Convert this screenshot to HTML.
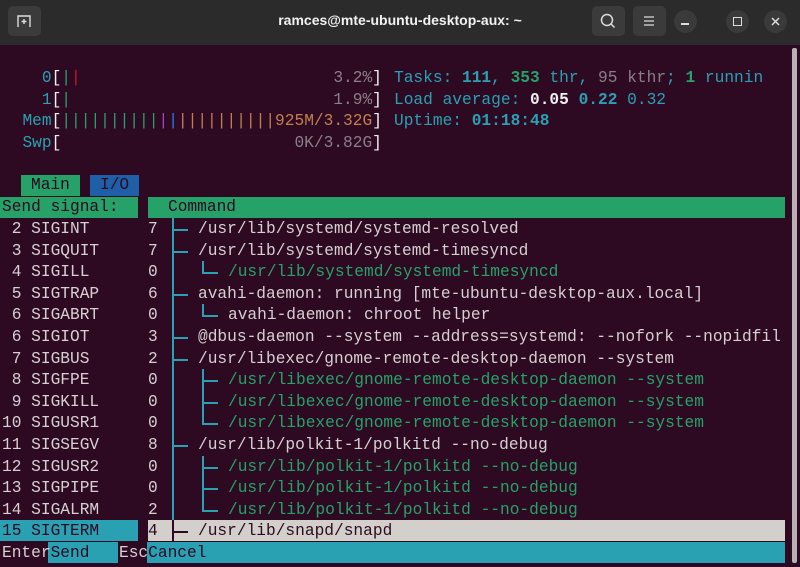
<!DOCTYPE html>
<html><head><meta charset="utf-8"><style>
*{margin:0;padding:0;box-sizing:border-box}
body{width:800px;height:567px;overflow:hidden;background:#2d0922;position:relative;font-family:"Liberation Mono",monospace;font-size:16.2px;color:#d6d0d2}
.t{position:absolute;white-space:pre;line-height:21.6px;height:21.6px;margin-top:1px}
.c{color:#2aa1b3}.g{color:#26a269}.gr{color:#8a7f88}.w{color:#f0f0f0}.o{color:#c0804f}.r{color:#c01c28}.m{color:#a347ba}.b{color:#2a7bde}.k{color:#2d0922}
.bd{font-weight:bold}
.bar{position:absolute}
.v{position:absolute;background:#2aa1b3;width:2px}
.h{position:absolute;background:#2aa1b3;height:2px}
</style></head><body>
<div class="bar" style="left:0;top:0;width:800px;height:45px;background:#2b2b2b"></div>
<div class="bar" style="left:8px;top:6px;width:33px;height:30px;background:#3b3b3b;border-radius:5px"></div>
<svg style="position:absolute;left:16px;top:14px" width="16" height="14" viewBox="0 0 16 14"><path d="M2 13V2h12v11M8 5v5M5.5 7.5h5" stroke="#ddd" stroke-width="1.4" fill="none"/></svg>
<div style="position:absolute;left:0;width:800px;top:12px;text-align:center;font:bold 14px 'Liberation Sans',sans-serif;color:#f2f2f2">ramces@mte-ubuntu-desktop-aux: ~</div>
<div class="bar" style="left:592px;top:6px;width:33px;height:30px;background:#3b3b3b;border-radius:5px"></div>
<svg style="position:absolute;left:600px;top:13px" width="16" height="16"><circle cx="7" cy="7" r="5.5" stroke="#ddd" stroke-width="1.5" fill="none"/><path d="M11 11l3.5 3.5" stroke="#ddd" stroke-width="1.5"/></svg>
<div class="bar" style="left:633px;top:6px;width:33px;height:30px;background:#3b3b3b;border-radius:5px"></div>
<svg style="position:absolute;left:643px;top:15px" width="12" height="12"><path d="M1 2h10M1 6h10M1 10h10" stroke="#ddd" stroke-width="1.3"/></svg>
<div class="bar" style="left:674px;top:10px;width:23px;height:23px;background:#3a3a3a;border-radius:50%"></div>
<div class="bar" style="left:681px;top:23px;width:8px;height:1.5px;background:#ddd"></div>
<div class="bar" style="left:726px;top:10px;width:23px;height:23px;background:#3a3a3a;border-radius:50%"></div>
<div class="bar" style="left:733px;top:17px;width:9px;height:9px;border:1.5px solid #ddd"></div>
<div class="bar" style="left:764px;top:10px;width:23px;height:23px;background:#3a3a3a;border-radius:50%"></div>
<svg style="position:absolute;left:771px;top:17px" width="9" height="9"><path d="M1 1l7 7M8 1l-7 7" stroke="#ddd" stroke-width="1.5"/></svg>
<div class="bar" style="left:792px;top:48px;width:5px;height:515px;background:#b8b0b5;border-radius:2px"></div>

<div class="t" style="left:3px;top:67px">    <span class="c">0</span><span class="w">[</span><span class="g">|</span><span class="r">|</span>                          <span class="gr">3.2%</span><span class="w">]</span></div>
<div class="t" style="left:3px;top:89px">    <span class="c">1</span><span class="w">[</span><span class="g">|</span>                           <span class="gr">1.9%</span><span class="w">]</span></div>
<div class="t" style="left:3px;top:110px">  <span class="c">Mem</span><span class="w">[</span><span class="g">||||||||||</span><span class="m">|</span><span class="b">|</span><span class="o">||||||||||925M/3.32G</span><span class="w">]</span></div>
<div class="t" style="left:3px;top:132px">  <span class="c">Swp</span><span class="w">[</span>                        <span class="gr">0K/3.82G</span><span class="w">]</span></div>
<div class="t c" style="left:394px;top:67px">Tasks: <span class="bd">111</span>, <span class="g bd">353</span> thr, <span class="gr">95 kthr</span>; <span class="g bd">1</span> runnin</div>
<div class="t c" style="left:394px;top:89px">Load average: <span class="w bd">0.05</span> <span class="bd">0.22</span> 0.32</div>
<div class="t c" style="left:394px;top:110px">Uptime: <span class="bd">01:18:48</span></div>

<div class="bar" style="left:21px;top:175px;width:59px;height:21px;background:#26a269"></div>
<div class="bar" style="left:90px;top:175px;width:49px;height:21px;background:#1f5fa8"></div>
<div class="t" style="left:31px;top:174px;color:#2d0922">Main</div>
<div class="t" style="left:100px;top:174px;color:#2d0922">I/O</div>
<div class="bar" style="left:0;top:197px;width:138px;height:21px;background:#26a269"></div>
<div class="bar" style="left:148px;top:197px;width:637px;height:21px;background:#26a269"></div>
<div class="t k" style="left:2px;top:196px">Send signal:</div>
<div class="t k" style="left:168px;top:196px">Command</div>

<div class="bar" style="left:0;top:520px;width:138px;height:21px;background:#2aa1b3"></div>
<div class="bar" style="left:148px;top:520px;width:637px;height:21px;background:#d3d0cc"></div>
<div class="bar" style="left:48px;top:542px;width:70px;height:21px;background:#2aa1b3"></div>
<div class="bar" style="left:147px;top:542px;width:638px;height:21px;background:#2aa1b3"></div>

<div class="v" style="left:172px;top:218px;height:323px"></div>
<div class="v" style="left:172px;top:520px;height:21px;background:#2d0922"></div>

<div class="t" style="left:2px;top:218px"> 2 SIGINT</div>
<div class="t" style="left:2px;top:240px"> 3 SIGQUIT</div>
<div class="t" style="left:2px;top:261px"> 4 SIGILL</div>
<div class="t" style="left:2px;top:283px"> 5 SIGTRAP</div>
<div class="t" style="left:2px;top:304px"> 6 SIGABRT</div>
<div class="t" style="left:2px;top:326px"> 6 SIGIOT</div>
<div class="t" style="left:2px;top:348px"> 7 SIGBUS</div>
<div class="t" style="left:2px;top:369px"> 8 SIGFPE</div>
<div class="t" style="left:2px;top:391px"> 9 SIGKILL</div>
<div class="t" style="left:2px;top:412px">10 SIGUSR1</div>
<div class="t" style="left:2px;top:434px">11 SIGSEGV</div>
<div class="t" style="left:2px;top:456px">12 SIGUSR2</div>
<div class="t" style="left:2px;top:477px">13 SIGPIPE</div>
<div class="t" style="left:2px;top:499px">14 SIGALRM</div>
<div class="t k" style="left:2px;top:520px">15 SIGTERM</div>
<div class="t" style="left:2px;top:542px">Enter<span class="k">Send</span></div>
<div class="t" style="left:119px;top:542px">Esc<span class="k">Cancel</span></div>

<div class="t" style="left:148px;top:218px">7</div><div class="h" style="left:172px;top:229px;width:16px"></div><div class="t" style="left:198px;top:218px">/usr/lib/systemd/systemd-resolved</div>
<div class="t" style="left:148px;top:240px">7</div><div class="h" style="left:172px;top:251px;width:16px"></div><div class="t" style="left:198px;top:240px">/usr/lib/systemd/systemd-timesyncd</div>
<div class="t" style="left:148px;top:261px">0</div><div class="v" style="left:202px;top:261px;height:12px"></div><div class="h" style="left:202px;top:272px;width:16px"></div><div class="t g" style="left:228px;top:261px">/usr/lib/systemd/systemd-timesyncd</div>
<div class="t" style="left:148px;top:283px">6</div><div class="h" style="left:172px;top:294px;width:16px"></div><div class="t" style="left:198px;top:283px">avahi-daemon: running [mte-ubuntu-desktop-aux.local]</div>
<div class="t" style="left:148px;top:304px">0</div><div class="v" style="left:202px;top:304px;height:12px"></div><div class="h" style="left:202px;top:315px;width:16px"></div><div class="t" style="left:228px;top:304px">avahi-daemon: chroot helper</div>
<div class="t" style="left:148px;top:326px">3</div><div class="h" style="left:172px;top:337px;width:16px"></div><div class="t" style="left:198px;top:326px">@dbus-daemon --system --address=systemd: --nofork --nopidfil</div>
<div class="t" style="left:148px;top:348px">2</div><div class="h" style="left:172px;top:359px;width:16px"></div><div class="t" style="left:198px;top:348px">/usr/libexec/gnome-remote-desktop-daemon --system</div>
<div class="v" style="left:202px;top:369px;height:55px"></div>
<div class="t" style="left:148px;top:369px">0</div><div class="h" style="left:202px;top:380px;width:16px"></div><div class="t g" style="left:228px;top:369px">/usr/libexec/gnome-remote-desktop-daemon --system</div>
<div class="t" style="left:148px;top:391px">0</div><div class="h" style="left:202px;top:402px;width:16px"></div><div class="t g" style="left:228px;top:391px">/usr/libexec/gnome-remote-desktop-daemon --system</div>
<div class="t" style="left:148px;top:412px">0</div><div class="h" style="left:202px;top:423px;width:16px"></div><div class="t g" style="left:228px;top:412px">/usr/libexec/gnome-remote-desktop-daemon --system</div>
<div class="t" style="left:148px;top:434px">8</div><div class="h" style="left:172px;top:445px;width:16px"></div><div class="t" style="left:198px;top:434px">/usr/lib/polkit-1/polkitd --no-debug</div>
<div class="v" style="left:202px;top:456px;height:54px"></div>
<div class="t" style="left:148px;top:456px">0</div><div class="h" style="left:202px;top:467px;width:16px"></div><div class="t g" style="left:228px;top:456px">/usr/lib/polkit-1/polkitd --no-debug</div>
<div class="t" style="left:148px;top:477px">0</div><div class="h" style="left:202px;top:488px;width:16px"></div><div class="t g" style="left:228px;top:477px">/usr/lib/polkit-1/polkitd --no-debug</div>
<div class="t" style="left:148px;top:499px">2</div><div class="h" style="left:202px;top:510px;width:16px"></div><div class="t g" style="left:228px;top:499px">/usr/lib/polkit-1/polkitd --no-debug</div>
<div class="t k" style="left:148px;top:520px">4</div><div class="v" style="left:172px;top:520px;height:21px;background:#2d0922"></div><div class="h" style="left:172px;top:531px;width:16px;background:#2d0922"></div><div class="t k" style="left:198px;top:520px">/usr/lib/snapd/snapd</div>
</body></html>
